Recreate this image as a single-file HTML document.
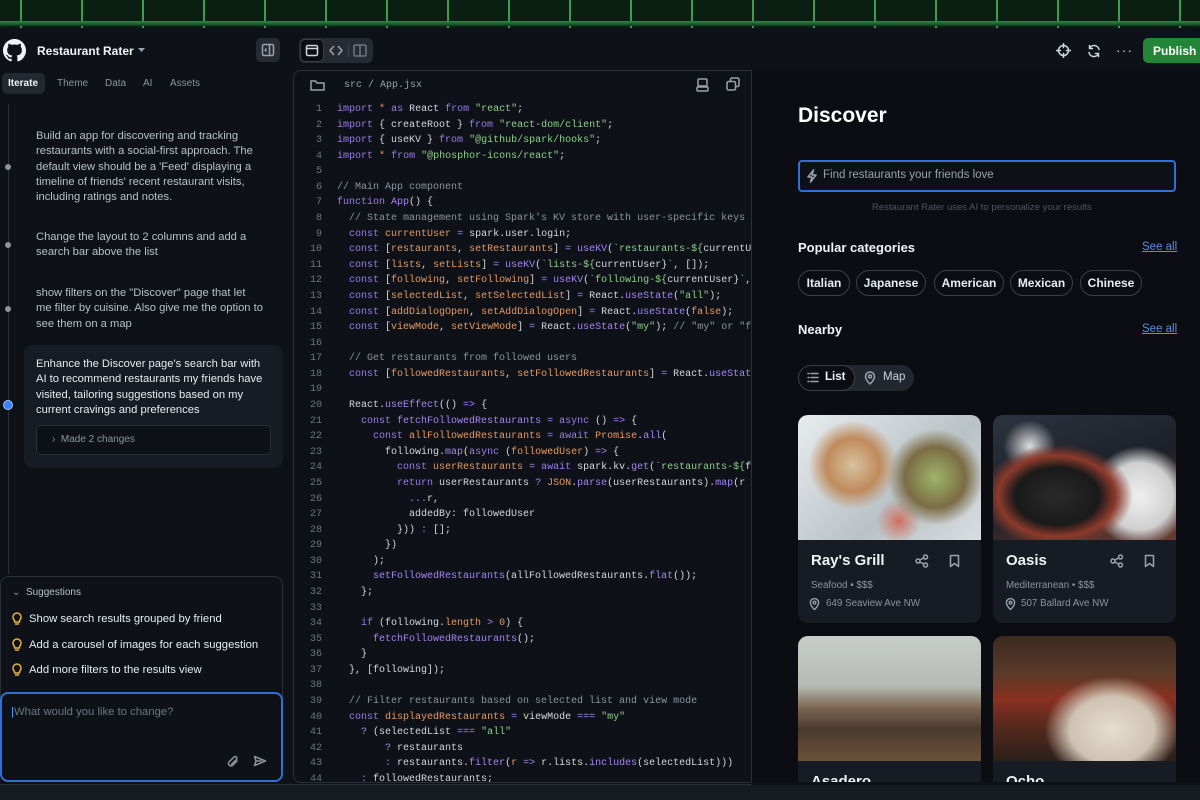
<!DOCTYPE html>
<html><head><meta charset="utf-8"><style>
*{box-sizing:border-box;margin:0;padding:0}
body{width:1200px;height:800px;overflow:hidden;background:#0d1117;font-family:"Liberation Sans",sans-serif;color:#e6edf3;position:relative}
.abs{position:absolute}
.top{left:0;top:0;width:1200px;height:28px;background:#0a1f12;
background-image:linear-gradient(90deg,transparent 20px,#3f9a52 20px,#3f9a52 22px,transparent 22px);background-size:61px 28px;}
.top:after{content:"";position:absolute;left:0;right:0;top:21px;height:5px;background:linear-gradient(#2f8a45,#123a20)}
.main{left:0;top:28px;width:1200px;height:757px;background:#0e1118;border-radius:8px 8px 0 0}
.bot{left:0;top:784px;width:1200px;height:16px;background:#161a21;border-top:1px solid #2a2f37}
.t{position:absolute;white-space:nowrap}
.ic{stroke:#9aa3ad;fill:none;stroke-width:1.5;stroke-linecap:round;stroke-linejoin:round}
.code{left:293px;top:70px;width:460px;height:713px;border:1px solid #2b3038;border-right:none;border-radius:8px 0 0 8px;background:#0e1118;overflow:hidden}
.ln{position:absolute;left:0;width:28px;text-align:right;font-family:"Liberation Mono",monospace;font-size:10px;color:#6e7681}
.cl{position:absolute;left:43px;font-family:"Liberation Mono",monospace;font-size:10px;color:#d4d8de;white-space:pre}
.k{color:#9b7ce8}.s{color:#8dcf8a}.v{color:#e39a62}.f{color:#a585f2}.c{color:#8b949e}.o{color:#a585f2}
.prev{left:751px;top:70px;width:449px;height:713px;background:#0b0d12;border-left:1px solid #2b3038;overflow:hidden}
.chip{position:absolute;top:200px;height:26px;border:1px solid #3a3f47;border-radius:13px;font-size:12px;color:#e6edf3;text-align:center;line-height:24px;font-weight:bold}
.card{position:absolute;width:183px;background:#161b24;border-radius:10px;overflow:hidden}
.msg{font-size:11.2px;line-height:15.3px;color:#b9c0c8}
</style></head><body>
<div class="abs top"></div>
<div class="abs main"></div>
<div class="abs bot"></div>

<svg class="abs" style="left:3px;top:39px" width="23" height="23" viewBox="0 0 16 16"><path fill="#f0f3f6" d="M8 0C3.580 0 0 3.58 0 8c0 3.54 2.29 6.53 5.47 7.59.4.07.55-.17.55-.38 0-.19-.01-.82-.01-1.49-2.010.37-2.53-.49-2.69-.94-.09-.23-.48-.94-.82-1.13-.28-.15-.68-.52-.01-.53.63-.01 1.08.58 1.23.82.72 1.21 1.87.87 2.33.66.07-.52.28-.87.51-1.07-1.78-.2-3.64-.89-3.64-3.95 0-.87.31-1.59.82-2.15-.08-.2-.36-1.02.08-2.12 0 0 .67-.21 2.2.82.64-.18 1.32-.27 2-.27.68 0 1.36.09 2 .27 1.53-1.04 2.2-.82 2.2-.82.44 1.1.16 1.92.08 2.12.51.56.82 1.27.82 2.15 0 3.07-1.87 3.75-3.65 3.95.29.25.54.73.54 1.48 0 1.07-.01 1.93-.01 2.2 0 .21.15.46.55.38A8.013 8.013 0 0016 8c0-4.42-3.58-8-8-8z"/></svg>
<div class="t" style="left:37px;top:44px;font-size:12px;font-weight:bold;color:#f0f3f6">Restaurant Rater</div>
<svg class="abs" style="left:138px;top:48px" width="8" height="5"><path d="M0 0h7L3.5 4z" fill="#9aa3ad"/></svg>
<div class="abs" style="left:256px;top:38px;width:24px;height:24px;background:#262b33;border-radius:5px"></div>
<svg class="abs" style="left:261px;top:43px" width="14" height="14" viewBox="0 0 14 14"><rect x="1.5" y="1.5" width="11" height="11" rx="1.5" class="ic"/><path d="M8.5 1.5v11M5 6l-1 1 1 1" class="ic"/></svg>
<div class="abs" style="left:299px;top:38px;width:74px;height:25px;background:#262b33;border-radius:6px"></div>
<div class="abs" style="left:300px;top:39px;width:24px;height:23px;background:#0b0d12;border:1px solid #3a3f47;border-radius:5px"></div>
<svg class="abs" style="left:305px;top:44px" width="14" height="13" viewBox="0 0 14 13"><rect x="1.5" y="1.5" width="11" height="10" rx="1.5" class="ic" style="stroke:#d0d6dc"/><path d="M1.5 4.5h11" class="ic" style="stroke:#d0d6dc"/></svg>
<svg class="abs" style="left:329px;top:45px" width="14" height="11"><path d="M4.5 1.5L1 5.5l3.5 4M9.5 1.5L13 5.5l-3.5 4" class="ic"/></svg>
<div class="abs" style="left:348px;top:44px;width:1px;height:13px;background:#3d434b"></div>
<svg class="abs" style="left:353px;top:44px" width="14" height="13"><rect x="1" y="1" width="12" height="11" rx="1.5" class="ic" style="stroke:#6e7681"/><path d="M7 1v11" class="ic" style="stroke:#6e7681"/></svg>
<svg class="abs" style="left:1056px;top:43px" width="15" height="15" viewBox="0 0 15 15"><circle cx="7.5" cy="7.5" r="5" class="ic" style="stroke:#d0d6dc"/><path d="M7.5 0.5v4M7.5 10.5v4M0.5 7.5h4M10.5 7.5h4" class="ic" style="stroke:#d0d6dc"/></svg>
<svg class="abs" style="left:1087px;top:44px" width="14" height="14" viewBox="0 0 14 14"><path d="M12 5.5A5 5 0 0 0 2.5 4.5M2 8.5a5 5 0 0 0 9.5 1M2.5 1.5v3h3M11.5 12.5v-3h-3" class="ic" style="stroke:#d0d6dc"/></svg>
<div class="t" style="left:1116px;top:42px;font-size:14px;color:#d0d6dc;letter-spacing:1px">···</div>
<div class="abs" style="left:1143px;top:38px;width:57px;height:25px;background:#238636;border-radius:5px 0 0 5px"></div>
<div class="t" style="left:1153px;top:44px;font-size:12px;font-weight:bold;color:#fff">Publish</div>

<div class="abs" style="left:2px;top:73px;width:43px;height:21px;background:#232831;border-radius:5px"></div>
<div class="t" style="left:8px;top:78px;font-size:10px;color:#f0f3f6;font-weight:bold">Iterate</div>
<div class="t" style="left:57px;top:78px;font-size:10px;color:#8b949e">Theme</div>
<div class="t" style="left:105px;top:78px;font-size:10px;color:#8b949e">Data</div>
<div class="t" style="left:143px;top:78px;font-size:10px;color:#8b949e">AI</div>
<div class="t" style="left:170px;top:78px;font-size:10px;color:#8b949e">Assets</div>

<div class="abs" style="left:8px;top:104px;width:1px;height:470px;background:#2b3038"></div>
<div class="abs" style="left:5px;top:164px;width:6px;height:6px;border-radius:3px;background:#8b949e"></div>
<div class="abs" style="left:5px;top:242px;width:6px;height:6px;border-radius:3px;background:#8b949e"></div>
<div class="abs" style="left:5px;top:306px;width:6px;height:6px;border-radius:3px;background:#8b949e"></div>
<div class="abs" style="left:3px;top:400px;width:10px;height:10px;border-radius:5px;background:#3b82f6;border:1px solid #9cc2ff"></div>
<div class="t msg" style="left:36px;top:129px">Build an app for discovering and tracking<br>restaurants with a social-first approach. The<br>default view should be a 'Feed' displaying a<br>timeline of friends' recent restaurant visits,<br>including ratings and notes.</div>
<div class="t msg" style="left:36px;top:230px">Change the layout to 2 columns and add a<br>search bar above the list</div>
<div class="t msg" style="left:36px;top:286px">show filters on the "Discover" page that let<br>me filter by cuisine. Also give me the option to<br>see them on a map</div>
<div class="abs" style="left:24px;top:345px;width:259px;height:123px;background:#171b23;border-radius:9px"></div>
<div class="t msg" style="left:36px;top:357px;color:#e6edf3">Enhance the Discover page's search bar with<br>AI to recommend restaurants my friends have<br>visited, tailoring suggestions based on my<br>current cravings and preferences</div>
<div class="abs" style="left:36px;top:425px;width:235px;height:30px;background:#0e1118;border:1px solid #2b3038;border-radius:5px"></div>
<div class="t" style="left:52px;top:434px;font-size:10px;color:#8b949e">›&nbsp;&nbsp;Made 2 changes</div>

<div class="abs" style="left:0;top:576px;width:283px;height:140px;border:1px solid #2b3038;border-radius:9px"></div>
<div class="t" style="left:12px;top:587px;font-size:10px;color:#b9c0c8"><span style="color:#8b949e">⌄</span>&nbsp; Suggestions</div>
<svg class="abs" style="left:12px;top:612px" width="10" height="13" viewBox="0 0 10 13"><path d="M2.5 8.5C1.5 7.5 1 6.5 1 5a4 4 0 0 1 8 0c0 1.5-.5 2.5-1.5 3.5V10h-5zM3.5 12h3" class="ic" style="stroke:#e3b341"/></svg>
<svg class="abs" style="left:12px;top:638px" width="10" height="13" viewBox="0 0 10 13"><path d="M2.5 8.5C1.5 7.5 1 6.5 1 5a4 4 0 0 1 8 0c0 1.5-.5 2.5-1.5 3.5V10h-5zM3.5 12h3" class="ic" style="stroke:#e3b341"/></svg>
<svg class="abs" style="left:12px;top:663px" width="10" height="13" viewBox="0 0 10 13"><path d="M2.5 8.5C1.5 7.5 1 6.5 1 5a4 4 0 0 1 8 0c0 1.5-.5 2.5-1.5 3.5V10h-5zM3.5 12h3" class="ic" style="stroke:#e3b341"/></svg>
<div class="t" style="left:29px;top:613px;font-size:11.3px;color:#e6edf3">Show search results grouped by friend</div>
<div class="t" style="left:29px;top:639px;font-size:11.3px;color:#e6edf3">Add a carousel of images for each suggestion</div>
<div class="t" style="left:29px;top:664px;font-size:11.3px;color:#e6edf3">Add more filters to the results view</div>
<div class="abs" style="left:0;top:692px;width:283px;height:90px;background:#0e1118;border:2px solid #2f6fd6;border-radius:8px"></div>
<div class="t" style="left:11px;top:706px;font-size:11.3px;color:#6e7681"><span style="color:#58a6ff">|</span>What would you like to change?</div>
<svg class="abs" style="left:227px;top:755px" width="12" height="13" viewBox="0 0 12 13"><path d="M10 6l-4.5 4.5a2.5 2.5 0 0 1-3.5-3.5L7 2a1.7 1.7 0 0 1 2.4 2.4L4.5 9.3" class="ic" style="stroke:#8b949e"/></svg>
<svg class="abs" style="left:253px;top:755px" width="14" height="12" viewBox="0 0 14 12"><path d="M1.5 1.5L12.5 6 1.5 10.5 3 6zM3 6h5" class="ic" style="stroke:#8b949e"/></svg>

<div class="abs code">
<svg class="abs" style="left:16px;top:8px" width="15" height="13"><path d="M1 2.5v8.5h13V4H7L5.5 2H1z" class="ic"/></svg>
<div class="t" style="left:50px;top:9px;font-family:'Liberation Mono',monospace;font-size:10px;color:#9aa3ad">src / App.jsx</div>
<svg class="abs" style="left:402px;top:7px" width="13" height="14"><rect x="2" y="1" width="9" height="7" rx="1" class="ic"/><rect x="1" y="9" width="11" height="4" rx="1" class="ic"/></svg>
<svg class="abs" style="left:432px;top:6px" width="14" height="14"><rect x="1" y="4.5" width="8.5" height="8.5" rx="1.5" class="ic"/><path d="M4.5 4V2.5A1.5 1.5 0 0 1 6 1h5.5A1.5 1.5 0 0 1 13 2.5V8a1.5 1.5 0 0 1-1.5 1.5H10" class="ic"/></svg>
<div id="code"></div>
</div>

<div class="abs prev">
<div class="t" style="left:46px;top:34px;font-size:21px;font-weight:bold;color:#fff">Discover</div>
<div class="abs" style="left:46px;top:90px;width:378px;height:32px;border:2px solid #2f6fd6;border-radius:4px;background:#0d1016"></div>
<svg class="abs" style="left:54px;top:99px" width="12" height="14" viewBox="0 0 12 14"><path d="M7.5 1L2 8h4l-1.5 5L10 6H6z" class="ic"/></svg>
<div class="t" style="left:71px;top:99px;font-size:11.5px;color:#9aa3ad">Find restaurants your friends love</div>
<div class="t" style="left:120px;top:132px;font-size:9.5px;color:#4e555e">Restaurant Rater uses AI to personalize your results</div>
<div class="t" style="left:46px;top:170px;font-size:13px;font-weight:bold;color:#f0f3f6">Popular categories</div>
<div class="t" style="left:390px;top:171px;font-size:11.5px;color:#5a8fe0;text-decoration:underline">See all</div>
<div class="chip" style="left:46px;width:52px">Italian</div>
<div class="chip" style="left:104px;width:70px">Japanese</div>
<div class="chip" style="left:182px;width:70px">American</div>
<div class="chip" style="left:258px;width:63px">Mexican</div>
<div class="chip" style="left:328px;width:62px">Chinese</div>
<div class="t" style="left:46px;top:252px;font-size:13px;font-weight:bold;color:#f0f3f6">Nearby</div>
<div class="t" style="left:390px;top:253px;font-size:11.5px;color:#5a8fe0;text-decoration:underline">See all</div>
<div class="abs" style="left:46px;top:295px;width:116px;height:26px;background:#22272f;border-radius:13px"></div>
<div class="abs" style="left:46px;top:295px;width:57px;height:26px;background:#0b0d12;border:1px solid #3a3f47;border-radius:13px"></div>
<svg class="abs" style="left:55px;top:302px" width="12" height="11"><path d="M1 1.5h1M1 5.5h1M1 9.5h1M4 1.5h7M4 5.5h7M4 9.5h7" class="ic"/></svg>
<div class="t" style="left:73px;top:301px;font-size:11.5px;font-weight:bold;color:#f0f3f6">List</div>
<svg class="abs" style="left:112px;top:301px" width="12" height="14" viewBox="0 0 12 14"><path d="M6 13s4.5-4 4.5-7.5a4.5 4.5 0 0 0-9 0C1.5 9 6 13 6 13z" class="ic"/><circle cx="6" cy="5.5" r="1.5" class="ic"/></svg>
<div class="t" style="left:131px;top:301px;font-size:11.5px;color:#c9d1d9">Map</div>

<div class="card" style="left:46px;top:345px;height:208px">
 <div style="height:125px;background:radial-gradient(circle at 30% 40%,#d6c2a0 0,#c08b5c 18%,transparent 30%),radial-gradient(circle at 75% 50%,#9eb56b 0,#7c6c45 20%,transparent 32%),radial-gradient(circle at 55% 85%,#d07060 0,transparent 15%),linear-gradient(135deg,#e8ecee,#b9c2c6 60%,#d8dde0)"></div>
 <div class="t" style="left:13px;top:137px;font-size:15px;font-weight:bold;color:#f0f3f6">Ray's Grill</div>
 <div class="t" style="left:13px;top:165px;font-size:9.8px;color:#8b949e">Seafood • $$$</div>
 <div class="t" style="left:28px;top:183px;font-size:9.8px;color:#8b949e">649 Seaview Ave NW</div>
</div>
<div class="card" style="left:241px;top:345px;height:208px">
 <div style="height:125px;background:radial-gradient(ellipse at 35% 65%,#2a2a2a 0,#1a1a1a 25%,#8c3a2a 35%,transparent 45%),radial-gradient(circle at 80% 65%,#f0f0f0 0,#cfcfcf 20%,transparent 30%),radial-gradient(circle at 20% 25%,#ddd 0,transparent 15%),linear-gradient(160deg,#2d3440,#1c2028 50%,#6a3a30)"></div>
 <div class="t" style="left:13px;top:137px;font-size:15px;font-weight:bold;color:#f0f3f6">Oasis</div>
 <div class="t" style="left:13px;top:165px;font-size:9.8px;color:#8b949e">Mediterranean • $$$</div>
 <div class="t" style="left:28px;top:183px;font-size:9.8px;color:#8b949e">507 Ballard Ave NW</div>
</div>
<div class="card" style="left:46px;top:566px;height:160px">
 <div style="height:125px;background:linear-gradient(180deg,#c8cdc8 0,#b5bab4 40%,#7a6450 58%,#4a3a2c 75%,#6b5238 100%)"></div>
 <div class="t" style="left:13px;top:137px;font-size:15px;font-weight:bold;color:#f0f3f6">Asadero</div>
</div>
<div class="card" style="left:241px;top:566px;height:160px">
 <div style="height:125px;background:radial-gradient(ellipse at 65% 75%,#e6ddd0 0,#cfc3b2 25%,transparent 40%),linear-gradient(180deg,#3a2a20 0,#5a3a28 30%,#8a3020 50%,#5a2a1e 70%,#2a201a 100%)"></div>
 <div class="t" style="left:13px;top:137px;font-size:15px;font-weight:bold;color:#f0f3f6">Ocho</div>
</div>
</div>
<svg class="abs" style="left:915px;top:554px" width="14" height="14" viewBox="0 0 14 14"><circle cx="10.5" cy="3" r="2" class="ic"/><circle cx="3" cy="7" r="2" class="ic"/><circle cx="10.5" cy="11" r="2" class="ic"/><path d="M4.8 6l4-2M4.8 8l4 2" class="ic"/></svg>
<svg class="abs" style="left:949px;top:554px" width="11" height="14"><path d="M1.5 1.5h8v11L5.5 9.5 1.5 12.5z" class="ic"/></svg>
<svg class="abs" style="left:1110px;top:554px" width="14" height="14" viewBox="0 0 14 14"><circle cx="10.5" cy="3" r="2" class="ic"/><circle cx="3" cy="7" r="2" class="ic"/><circle cx="10.5" cy="11" r="2" class="ic"/><path d="M4.8 6l4-2M4.8 8l4 2" class="ic"/></svg>
<svg class="abs" style="left:1144px;top:554px" width="11" height="14"><path d="M1.5 1.5h8v11L5.5 9.5 1.5 12.5z" class="ic"/></svg>
<svg class="abs" style="left:809px;top:597px" width="11" height="14" viewBox="0 0 12 14"><path d="M6 13s4.5-4 4.5-7.5a4.5 4.5 0 0 0-9 0C1.5 9 6 13 6 13z" class="ic"/><circle cx="6" cy="5.5" r="1.5" class="ic"/></svg>
<svg class="abs" style="left:1005px;top:597px" width="11" height="14" viewBox="0 0 12 14"><path d="M6 13s4.5-4 4.5-7.5a4.5 4.5 0 0 0-9 0C1.5 9 6 13 6 13z" class="ic"/><circle cx="6" cy="5.5" r="1.5" class="ic"/></svg>
<div class="abs" style="left:751px;top:782px;width:449px;height:3px;background:#0e1118"></div>

<div id="lines" style="display:none">
<span class="k">import</span> <span class="v">*</span> <span class="k">as</span> React <span class="k">from</span> <span class="s">"react"</span>;
<span class="k">import</span> { createRoot } <span class="k">from</span> <span class="s">"react-dom/client"</span>;
<span class="k">import</span> { useKV } <span class="k">from</span> <span class="s">"@github/spark/hooks"</span>;
<span class="k">import</span> <span class="v">*</span> <span class="k">from</span> <span class="s">"@phosphor-icons/react"</span>;

<span class="c">// Main App component</span>
<span class="k">function</span> <span class="f">App</span>() {
  <span class="c">// State management using Spark's KV store with user-specific keys</span>
  <span class="k">const</span> <span class="v">currentUser</span> <span class="o">=</span> spark.user.login;
  <span class="k">const</span> [<span class="v">restaurants</span>, <span class="v">setRestaurants</span>] <span class="o">=</span> <span class="f">useKV</span>(<span class="s">`restaurants-${</span>currentUser}`, []);
  <span class="k">const</span> [<span class="v">lists</span>, <span class="v">setLists</span>] <span class="o">=</span> <span class="f">useKV</span>(<span class="s">`lists-${</span>currentUser}<span class="s">`</span>, []);
  <span class="k">const</span> [<span class="v">following</span>, <span class="v">setFollowing</span>] <span class="o">=</span> <span class="f">useKV</span>(<span class="s">`following-${</span>currentUser}<span class="s">`</span>, []);
  <span class="k">const</span> [<span class="v">selectedList</span>, <span class="v">setSelectedList</span>] <span class="o">=</span> React.<span class="f">useState</span>(<span class="s">"all"</span>);
  <span class="k">const</span> [<span class="v">addDialogOpen</span>, <span class="v">setAddDialogOpen</span>] <span class="o">=</span> React.<span class="f">useState</span>(<span class="v">false</span>);
  <span class="k">const</span> [<span class="v">viewMode</span>, <span class="v">setViewMode</span>] <span class="o">=</span> React.<span class="f">useState</span>(<span class="s">"my"</span>); <span class="c">// "my" or "following"</span>

  <span class="c">// Get restaurants from followed users</span>
  <span class="k">const</span> [<span class="v">followedRestaurants</span>, <span class="v">setFollowedRestaurants</span>] <span class="o">=</span> React.<span class="f">useState</span>([]);

  React.<span class="f">useEffect</span>(() <span class="o">=&gt;</span> {
    <span class="k">const</span> <span class="f">fetchFollowedRestaurants</span> <span class="o">=</span> <span class="k">async</span> () <span class="o">=&gt;</span> {
      <span class="k">const</span> <span class="v">allFollowedRestaurants</span> <span class="o">=</span> <span class="k">await</span> <span class="v">Promise</span>.<span class="f">all</span>(
        following.<span class="f">map</span>(<span class="k">async</span> (<span class="v">followedUser</span>) <span class="o">=&gt;</span> {
          <span class="k">const</span> <span class="v">userRestaurants</span> <span class="o">=</span> <span class="k">await</span> spark.kv.<span class="f">get</span>(<span class="s">`restaurants-${</span>followedUser}`);
          <span class="k">return</span> userRestaurants <span class="o">?</span> <span class="v">JSON</span>.<span class="f">parse</span>(userRestaurants).<span class="f">map</span>(r =&gt; ({
            <span class="o">...</span>r,
            addedBy: followedUser
          })) <span class="o">:</span> [];
        })
      );
      <span class="f">setFollowedRestaurants</span>(allFollowedRestaurants.<span class="f">flat</span>());
    };

    <span class="k">if</span> (following.<span class="v">length</span> <span class="o">&gt;</span> <span class="v">0</span>) {
      <span class="f">fetchFollowedRestaurants</span>();
    }
  }, [following]);

  <span class="c">// Filter restaurants based on selected list and view mode</span>
  <span class="k">const</span> <span class="v">displayedRestaurants</span> <span class="o">=</span> viewMode <span class="o">===</span> <span class="s">"my"</span>
    <span class="o">?</span> (selectedList <span class="o">===</span> <span class="s">"all"</span>
        <span class="o">?</span> restaurants
        <span class="o">:</span> restaurants.<span class="f">filter</span>(<span class="v">r</span> <span class="o">=&gt;</span> r.lists.<span class="f">includes</span>(selectedList)))
    <span class="o">:</span> followedRestaurants;

</div>
<script>
var src=document.getElementById('lines').innerHTML.replace(/^\n/,'').split('\n');
var h='';
for(var i=0;i<45;i++){var y=33+i*15.58;h+='<div class="ln" style="top:'+y+'px">'+(i+1)+'</div><div class="cl" style="top:'+y+'px">'+(src[i]||'')+'</div>';}
document.getElementById('code').innerHTML=h;
</script>
</body></html>
